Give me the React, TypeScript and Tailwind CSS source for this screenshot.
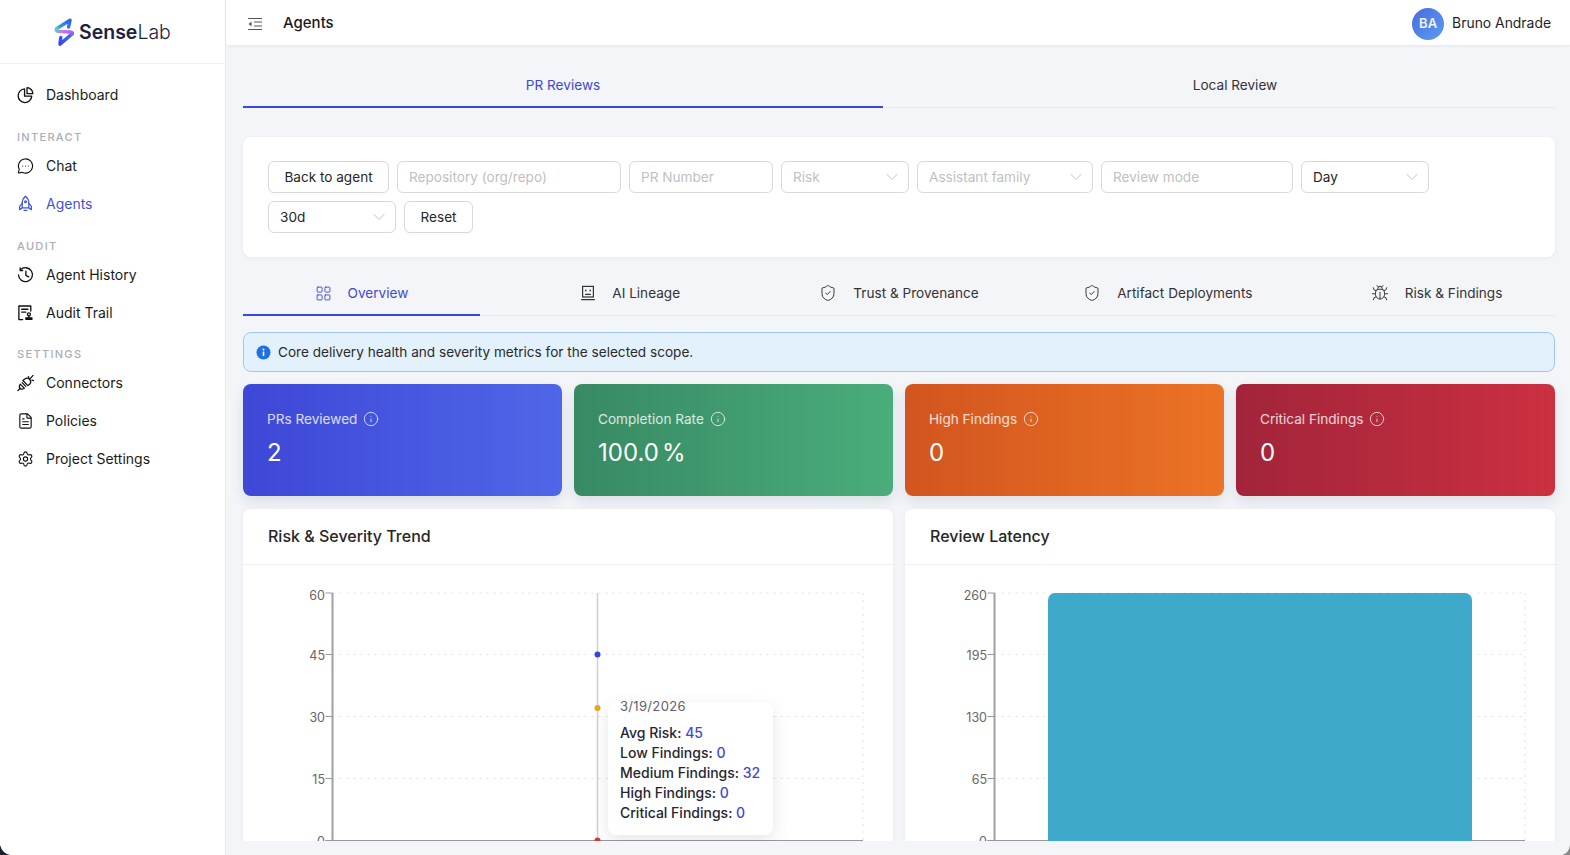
import { Bug, ChevronDown, Info, LayoutGrid, MessageCircleMore, ShieldCheck, FileText, Settings } from "lucide-react";
import type { ReactNode } from "react";

const Logo = () => (
  <div className="flex items-center gap-[4px]">
    <svg width="22" height="29" viewBox="0 0 22 29" fill="none">
      <defs>
        <linearGradient id="lgTop" x1="1" y1="14" x2="16" y2="1" gradientUnits="userSpaceOnUse">
          <stop offset="0" stopColor="#35d6c5" />
          <stop offset="0.5" stopColor="#2f8df0" />
          <stop offset="1" stopColor="#2f5df0" />
        </linearGradient>
        <linearGradient id="lgBottom" x1="6" y1="28" x2="20" y2="14" gradientUnits="userSpaceOnUse">
          <stop offset="0" stopColor="#3a3ff0" />
          <stop offset="1" stopColor="#3d7bf5" />
        </linearGradient>
        <linearGradient id="lgMid" x1="2" y1="12" x2="20" y2="15" gradientUnits="userSpaceOnUse">
          <stop offset="0" stopColor="#40d9d0" />
          <stop offset="0.45" stopColor="#d66df0" />
          <stop offset="1" stopColor="#a05cf2" />
        </linearGradient>
      </defs>
      <path d="M17 2.2 15.6 9M17 2.2 3.6 10.6" stroke="url(#lgTop)" strokeWidth="3.4" strokeLinecap="round" strokeLinejoin="round" />
      <path d="M19.4 15.6 7 26.2 7.8 19.4" stroke="url(#lgBottom)" strokeWidth="3.4" strokeLinecap="round" strokeLinejoin="round" />
      <path d="M3.6 10.8Q2.4 12.8 5 13.4L17 14Q19.6 14.4 19.4 15.8" stroke="url(#lgMid)" strokeWidth="3.4" strokeLinecap="round" />
    </svg>
    <span className="text-[19.5px] leading-none text-[#1f2142] font-semibold">
      Sense<span className="font-light">Lab</span>
    </span>
  </div>
);

const PieIcon = () => (
  <svg width="18" height="18" viewBox="0 0 18 18" fill="none" stroke="#111" strokeWidth="1.4">
    <path d="M8 2.6A7.2 7.2 0 1 0 15.6 10.2H8Z" strokeLinejoin="round" />
    <path d="M10.6 1.2A6.4 6.4 0 0 1 16.8 7.6H10.6Z" strokeLinejoin="round" />
  </svg>
);

const RocketIcon = () => (
  <svg width="18" height="18" viewBox="0 0 18 18" fill="none" stroke="#3f55d8" strokeWidth="1.3" strokeLinejoin="round" strokeLinecap="round">
    <path d="M9 .8C11.4 2.8 12.5 5.4 12.5 8V13.2H5.5V8C5.5 5.4 6.6 2.8 9 .8Z" />
    <path d="M5.5 8.5 2.8 11.5V15L5.5 13.2" />
    <path d="M12.5 8.5 15.2 11.5V15L12.5 13.2" />
    <circle cx="9" cy="6.6" r="1" />
    <path d="M7.6 15.8H10.4" />
  </svg>
);

const HistoryIcon = () => (
  <svg width="18" height="18" viewBox="0 0 18 18" fill="none" stroke="#111" strokeWidth="1.4" strokeLinecap="round" strokeLinejoin="round">
    <path d="M3.6 3.6A7.4 7.4 0 1 1 1.6 9" />
    <path d="M3.4 1.6V4.2H6" />
    <path d="M9.4 5V9.4L12.4 11" />
  </svg>
);

const AuditIcon = () => (
  <svg width="18" height="18" viewBox="0 0 18 18" fill="none" stroke="#111" strokeWidth="1.4" strokeLinecap="round" strokeLinejoin="round">
    <path d="M6 16H2V1.6H14.6V7" />
    <path d="M5 5H11.6M5 8H9.4" />
    <circle cx="12.6" cy="10.4" r="1.6" />
    <path d="M9.4 15.6V14.2H15.8V15.6Z" fill="#111" />
    <path d="M12.6 12V14" />
  </svg>
);

const PlugIcon = () => (
  <svg width="18" height="18" viewBox="0 0 18 18" fill="none" stroke="#111" strokeWidth="1.3" strokeLinecap="round" strokeLinejoin="round">
    <path d="M1 17 3.6 14.4" />
    <path d="M3.4 10.2 7.8 14.6 6 15.4C5 15.8 4 15.6 3.2 14.8 2.4 14 2.2 13 2.6 12Z" />
    <path d="M5.4 8.6 9.4 12.6" />
    <path d="M6.2 6.4 11.6 11.8 13.6 10C14.6 9 14.8 7 13.6 5.4 12 3.8 10 3.6 8.6 4.6Z" />
    <path d="M13.6 5 17 1" />
    <path d="M12 2.2 12.8 4.2M15.8 6 17.6 6.4" />
  </svg>
);

const ToggleIcon = () => (
  <svg width="16" height="14" viewBox="0 0 16 14" fill="none" stroke="#55575f" strokeWidth="1.1">
    <path d="M1 1.5H15M7 5H15M7 9H15M1 12.5H15" />
    <path d="M4.5 4.4 1.6 7 4.5 9.6Z" fill="#55575f" stroke="none" />
  </svg>
);

const LineageIcon = () => (
  <svg width="16" height="16" viewBox="0 0 16 16" fill="none" stroke="#333" strokeWidth="1.2" strokeLinecap="round">
    <rect x="2.6" y="1.4" width="10.8" height="10.6" />
    <path d="M1.6 14.6H14.4" strokeWidth="1.4" />
    <path d="M5.6 9.4H10.4" />
    <path d="M5.8 5.2V5.8M10.2 5.2V5.8" strokeWidth="1.5" />
  </svg>
);

const NavItem = ({ icon, label, active }: { icon: ReactNode; label: string; active?: boolean }) => (
  <div className={`flex items-center h-[38px] gap-[12px] pl-[17px] text-sm ${active ? "text-[#3f55d8]" : "text-[#1a1a1a]"}`}>
    <span className="w-[17px] flex justify-center shrink-0">{icon}</span>
    <span>{label}</span>
  </div>
);

const SectionLabel = ({ children }: { children: ReactNode }) => (
  <div className="pl-[17px] h-[18px] text-[11px] leading-[17px] tracking-[0.12em] text-[#a9adbb] font-medium">{children}</div>
);

const Sidebar = () => (
  <aside className="w-[226px] shrink-0 bg-white border-r border-[#e8eaf0] flex flex-col">
    <div className="h-[64px] border-b border-[#f0f1f5] flex items-center pl-[53px] pt-[2px]">
      <Logo />
    </div>
    <nav className="pt-[12px] flex flex-col">
      <NavItem icon={<PieIcon />} label="Dashboard" />
      <div className="mt-[15px]"><SectionLabel>INTERACT</SectionLabel></div>
      <NavItem icon={<MessageCircleMore size={20} strokeWidth={1.6} color="#111" />} label="Chat" />
      <NavItem icon={<RocketIcon />} label="Agents" active />
      <div className="mt-[15px]"><SectionLabel>AUDIT</SectionLabel></div>
      <NavItem icon={<HistoryIcon />} label="Agent History" />
      <NavItem icon={<AuditIcon />} label="Audit Trail" />
      <div className="mt-[14px]"><SectionLabel>SETTINGS</SectionLabel></div>
      <NavItem icon={<PlugIcon />} label="Connectors" />
      <NavItem icon={<FileText size={20} strokeWidth={1.6} color="#111" />} label="Policies" />
      <NavItem icon={<Settings size={20} strokeWidth={1.6} color="#111" />} label="Project Settings" />
    </nav>
  </aside>
);

const Header = () => (
  <header className="h-[45px] pt-[2px] shrink-0 bg-white shadow-[0_1px_3px_rgba(20,30,60,0.07)] flex items-center justify-between pl-[21px] pr-[19px] relative z-10">
    <div className="flex items-center gap-[20px]">
      <ToggleIcon />
      <span className="text-[15px] font-medium text-[#1a1a1a]">Agents</span>
    </div>
    <div className="flex items-center gap-[8px]">
      <div className="w-[32px] h-[32px] rounded-full bg-gradient-to-br from-[#4a6ae0] to-[#5a9df0] flex items-center justify-center text-white/90 text-[13px] font-semibold">BA</div>
      <span className="text-[13.9px] text-[#1f1f1f]">Bruno Andrade</span>
    </div>
  </header>
);

const inputCls = "h-[32px] px-[11px] border border-[#d9d9d9] rounded-md bg-white text-[13.6px] flex items-center";

const Field = ({ w, children }: { w: string; children: string }) => (
  <div className={`${inputCls} ${w} text-[#bfbfbf]`}>{children}</div>
);

const Select = ({ w, children, filled }: { w: string; children: string; filled?: boolean }) => (
  <div className={`h-[32px] pl-[11px] pr-[6px] border border-[#d9d9d9] rounded-md bg-white text-[13.6px] flex items-center ${w} justify-between ${filled ? "text-[#262626]" : "text-[#bfbfbf]"}`}>
    <span>{children}</span>
    <ChevronDown size={20} strokeWidth={0.9} className="text-[#b0b0b0]" />
  </div>
);

const Button = ({ w, children }: { w: string; children: string }) => (
  <div className={`h-[32px] ${w} border border-[#d9d9d9] rounded-md bg-white text-[13.6px] text-[#262626] flex items-center justify-center shadow-[0_2px_0_rgba(0,0,0,0.02)]`}>{children}</div>
);

const Filters = () => (
  <div className="bg-white rounded-lg shadow-[0_1px_4px_rgba(20,30,60,0.05)] py-[24px] pl-[25px] pr-[24px] mt-[29px] flex flex-wrap gap-[8px]">
    <Button w="w-[121px]">Back to agent</Button>
    <Field w="w-[224px]">{"Repository (org/repo)"}</Field>
    <Field w="w-[144px]">PR Number</Field>
    <Select w="w-[128px]">Risk</Select>
    <Select w="w-[176px]">Assistant family</Select>
    <Field w="w-[192px]">Review mode</Field>
    <Select w="w-[128px]" filled>Day</Select>
    <Select w="w-[128px]" filled>30d</Select>
    <Button w="w-[69px]">Reset</Button>
  </div>
);

const TopTabs = () => (
  <div className="relative mt-[18px] h-[45px] grid grid-cols-2 gap-[32px] text-[13.6px] border-b border-[#e8eaf0]">
    <div className="flex items-center justify-center text-[#3f48d6] shadow-[inset_0_-2px_0_#3f48d6] -mb-px">PR Reviews</div>
    <div className="flex items-center justify-center text-[#333]">Local Review</div>
  </div>
);

const innerTabs: { label: string; icon: ReactNode; active?: boolean }[] = [
  { label: "Overview", icon: <LayoutGrid size={17} strokeWidth={1.3} />, active: true },
  { label: "AI Lineage", icon: <LineageIcon /> },
  { label: "Trust & Provenance", icon: <ShieldCheck size={18} strokeWidth={1.3} /> },
  { label: "Artifact Deployments", icon: <ShieldCheck size={18} strokeWidth={1.3} /> },
  { label: "Risk & Findings", icon: <Bug size={18} strokeWidth={1.3} /> },
];

const InnerTabs = () => (
  <div className="mt-[13px] h-[46px] grid grid-cols-5 gap-[32px] border-b border-[#e8eaf0] text-[13.6px]">
    {innerTabs.map((t) => (
      <div
        key={t.label}
        className={`flex items-center justify-center gap-[16px] -mb-px ${t.active ? "text-[#3f48d6] shadow-[inset_0_-2px_0_#3f48d6]" : "text-[#333]"}`}
      >
        {t.icon}
        <span>{t.label}</span>
      </div>
    ))}
  </div>
);

const InfoBar = () => (
  <div className="mt-[16px] h-[40px] flex items-center gap-[7px] px-[12px] rounded-lg bg-[#e3f1fd] border border-[#9cc8f5] text-[13.6px] text-[#2a2a2a]">
    <svg width="15" height="15" viewBox="0 0 15 15" className="shrink-0">
      <circle cx="7.5" cy="7.5" r="7" fill="#1f6fe5" />
      <rect x="6.7" y="6.4" width="1.6" height="4.6" rx="0.5" fill="#fff" />
      <circle cx="7.5" cy="4.4" r="1" fill="#fff" />
    </svg>
    <span>Core delivery health and severity metrics for the selected scope.</span>
  </div>
);

const StatCard = ({ label, value, bg }: { label: string; value: ReactNode; bg: string }) => (
  <div className={`h-[112px] rounded-lg px-[24px] pt-[25px] text-white shadow-[0_6px_14px_rgba(20,30,60,0.1)] ${bg}`}>
    <div className="flex items-center gap-[6px] text-[13.6px] text-white/80 h-[20px]">
      <span>{label}</span>
      <Info size={16} strokeWidth={1.4} />
    </div>
    <div className="mt-[8px] text-2xl leading-[32px]">{value}</div>
  </div>
);

const Stats = () => (
  <div className="mt-[12px] grid grid-cols-4 gap-[12px]">
    <StatCard label="PRs Reviewed" value="2" bg="bg-gradient-to-r from-[#3e47d6] to-[#5066e8]" />
    <StatCard label="Completion Rate" value={<>100.0<span className="ml-[3px]">%</span></>} bg="bg-gradient-to-r from-[#378a63] to-[#4aad7b]" />
    <StatCard label="High Findings" value="0" bg="bg-gradient-to-r from-[#d2551f] to-[#eb7325]" />
    <StatCard label="Critical Findings" value="0" bg="bg-gradient-to-r from-[#a2243a] to-[#cb3040]" />
  </div>
);

const ticksY = [28, 89.5, 151.5, 213.5, 275.5];

const Axes = ({ labels, right }: { labels: string[]; right: number }) => {
  const axisX = 89.5;
  return (
    <>
      {ticksY.map((y, i) => (
        <g key={labels[i]}>
          <line x1={axisX} x2={right} y1={y} y2={y} stroke="#e0e0e0" strokeDasharray="2 5" />
          <line x1={axisX - 7} x2={axisX} y1={y} y2={y} stroke="#999" />
          <text x={axisX - 7.5} y={y + (i === 0 ? 7 : 5.5)} textAnchor="end" fontSize="12.5" fill="#666">
            {labels[i]}
          </text>
        </g>
      ))}
      <line x1={right} x2={right} y1={28} y2={276} stroke="#e0e0e0" strokeDasharray="2 5" />
      <line x1={axisX} x2={axisX} y1={28} y2={276} stroke="#a0a0a0" strokeWidth="2" />
      <line x1={axisX - 7} x2={right} y1={275.5} y2={275.5} stroke="#999" />
    </>
  );
};

const TooltipRow = ({ label, value }: { label: string; value: string }) => (
  <div className="h-[20px] leading-[20px]">
    {label}: <span className="text-[#3f48d6]">{value}</span>
  </div>
);

const ChartCard = ({ title, children }: { title: string; children: ReactNode }) => (
  <div className="relative bg-white rounded-lg shadow-[0_1px_4px_rgba(20,30,60,0.05)]">
    <div className="h-[56px] pb-[2px] border-b border-[#eceef2] flex items-center px-[25px] text-base font-medium text-[#262626]">{title}</div>
    <div className="relative h-[300px]">{children}</div>
  </div>
);

const Charts = () => (
  <div className="mt-[13px] grid grid-cols-2 gap-[12px]">
    <ChartCard title="Risk & Severity Trend">
      <svg viewBox="0 0 650 300" className="block w-full h-[300px]">
        <Axes labels={["60", "45", "30", "15", "0"]} right={620} />
        <line x1={354.5} x2={354.5} y1={28} y2={276} stroke="#d2d2d2" strokeWidth="1.6" />
        <circle cx={354.5} cy={89.5} r="3" fill="#3346d8" />
        <circle cx={354.5} cy={143} r="3" fill="#e8a623" />
        <circle cx={354.5} cy={275.5} r="3" fill="#d63a3a" />
      </svg>
      <div className="absolute left-[365px] top-[137px] w-[165px] h-[133px] bg-white rounded-lg shadow-[0_6px_18px_rgba(0,0,0,0.1)] pl-[12px] text-sm font-medium text-[#262633]">
        <div className="text-[13px] font-normal text-[#5b5f70] h-[19px] leading-[19px] tracking-wide mb-[7px] -mt-[5px]">3/19/2026</div>
        <TooltipRow label="Avg Risk" value="45" />
        <TooltipRow label="Low Findings" value="0" />
        <TooltipRow label="Medium Findings" value="32" />
        <TooltipRow label="High Findings" value="0" />
        <TooltipRow label="Critical Findings" value="0" />
      </div>
    </ChartCard>
    <ChartCard title="Review Latency">
      <svg viewBox="0 0 650 300" className="block w-full h-[300px]">
        <Axes labels={["260", "195", "130", "65", "0"]} right={620} />
        <path d="M143 300V35a7 7 0 0 1 7-7H560a7 7 0 0 1 7 7V300Z" fill="#3fa9cb" />
      </svg>
    </ChartCard>
  </div>
);

export default function App() {
  return (
    <div className="relative h-screen flex overflow-hidden bg-[#f3f5f9] font-['Inter',sans-serif]">
      <Sidebar />
      <div className="flex-1 min-w-0 flex flex-col">
        <Header />
        <main className="flex-1 min-h-0 mb-[14px] pl-[17px] pr-[15px] overflow-hidden">
          <TopTabs />
          <Filters />
          <InnerTabs />
          <InfoBar />
          <Stats />
          <Charts />
        </main>
      </div>
      <svg width="12" height="12" viewBox="0 0 12 12" className="absolute left-0 bottom-0">
        <path d="M0 2Q2 10 10 12H0Z" fill="#1b1f2a" />
      </svg>
      <svg width="10" height="10" viewBox="0 0 10 10" className="absolute right-0 bottom-0">
        <path d="M10 0Q9 8 2 10H10Z" fill="#8a8a8a" />
      </svg>
    </div>
  );
}
